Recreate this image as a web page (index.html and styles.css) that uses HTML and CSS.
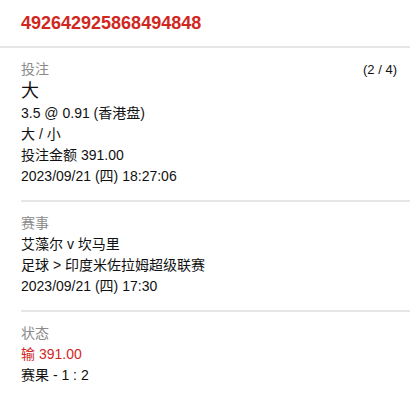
FILE: index.html
```html
<!DOCTYPE html>
<html lang="zh-CN">
<head>
    <meta charset="UTF-8">
    <meta name="viewport" content="width=device-width, initial-scale=1.0">
    <title>注单详情</title>
    <link rel="stylesheet" href="styles.css">
</head>
<body>
    <div class="ticket-id">492642925868494848</div>

    <div class="details">
        <div class="section">
            <div class="section-head">
                <span class="label">投注</span>
                <span class="pager">(2 / 4)</span>
            </div>
            <div class="selection">大</div>
            <div class="row">3.5 @ 0.91 (香港盘)</div>
            <div class="row">大 / 小</div>
            <div class="row">投注金额 391.00</div>
            <div class="row">2023/09/21 (四) 18:27:06</div>
        </div>

        <div class="section">
            <div class="section-head">
                <span class="label">赛事</span>
            </div>
            <div class="row">艾藻尔 v 坎马里</div>
            <div class="row">足球 &gt; 印度米佐拉姆超级联赛</div>
            <div class="row">2023/09/21 (四) 17:30</div>
        </div>

        <div class="section last">
            <div class="section-head">
                <span class="label">状态</span>
            </div>
            <div class="row lose">输 391.00</div>
            <div class="row">赛果 - 1 : 2</div>
        </div>
    </div>
</body>
</html>
```

FILE: styles.css
```css
body {
    margin: 0;
    font-family: "Liberation Sans", Arial, "Noto Sans CJK SC", sans-serif;
    font-size: 14px;
    color: #111;
    background: #fff;
}
.ticket-id {
    padding: 12px 21px 12px;
    font-size: 18px;
    line-height: 22px;
    font-weight: bold;
    color: #d0281f;
    border-bottom: 2px solid #e6e6e6;
}
.details {
    margin-left: 21px;
}
.section {
    padding: 11px 13px 13px 0;
    border-bottom: 2px solid #e6e6e6;
}
.section.last {
    border-bottom: none;
}
.section-head {
    display: flex;
    justify-content: space-between;
    line-height: 21px;
}
.label {
    color: #8a8a8a;
}
.pager {
    font-size: 13px;
}
.selection {
    font-size: 18px;
    line-height: 23px;
}
.row {
    line-height: 21px;
}
.lose {
    color: #d0281f;
}
```
